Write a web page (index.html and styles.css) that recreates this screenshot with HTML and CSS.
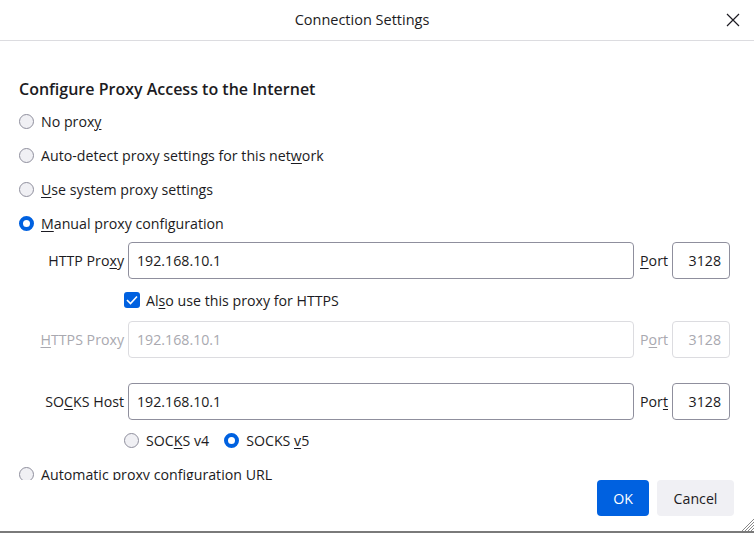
FILE: index.html
```html
<!DOCTYPE html>
<html>
<head>
<meta charset="utf-8">
<link rel="stylesheet" href="styles.css">
</head>
<body>
<div class="window">
  <div class="titlebar">
    <span class="title">Connection Settings</span>
    <span class="close"><svg width="14" height="14" viewBox="0 0 14 14"><path d="M1 1L13 13M13 1L1 13" stroke="#1c1b22" stroke-width="1.2" fill="none"/></svg></span>
  </div>
  <div class="content">
    <h1 class="heading">Configure Proxy Access to the Internet</h1>
    <div class="radio-row"><span class="radio"></span><span>No prox<u>y</u></span></div>
    <div class="radio-row"><span class="radio"></span><span>Auto-detect proxy settings for this net<u>w</u>ork</span></div>
    <div class="radio-row"><span class="radio"></span><span><u>U</u>se system proxy settings</span></div>
    <div class="radio-row"><span class="radio checked"></span><span><u>M</u>anual proxy configuration</span></div>

    <div class="proxy-grid">
      <label class="plabel">HTTP Pro<u>x</u>y</label>
      <div class="field">192.168.10.1</div>
      <label class="portlabel"><u>P</u>ort</label>
      <div class="field port">3128</div>

      <div class="check-row">
        <span class="checkbox"><svg width="12" height="10" viewBox="0 0 12 10"><path d="M1 5L4.5 8.5L11 1.5" stroke="#fff" stroke-width="1.6" fill="none"/></svg></span>
        <span>Al<u>s</u>o use this proxy for HTTPS</span>
      </div>

      <label class="plabel disabled"><u>H</u>TTPS Proxy</label>
      <div class="field disabled">192.168.10.1</div>
      <label class="portlabel disabled">P<u>o</u>rt</label>
      <div class="field port disabled">3128</div>

      <div class="spacer"></div>

      <label class="plabel">SO<u>C</u>KS Host</label>
      <div class="field">192.168.10.1</div>
      <label class="portlabel">Por<u>t</u></label>
      <div class="field port">3128</div>

      <div class="socks-row">
        <span class="radio small"></span><span class="socks-label">SOC<u>K</u>S v4</span>
        <span class="radio small checked"></span><span>SOCKS <u>v</u>5</span>
      </div>
    </div>

    <div class="radio-row last"><span class="radio"></span><span>Automatic proxy configuration URL</span></div>
  </div>
  <div class="footer">
    <button class="btn primary">OK</button>
    <button class="btn">Cancel</button>
  </div>
  <span class="grip"><svg width="14" height="14" viewBox="0 0 14 14"><path d="M14 2L2 14M14 5L5 14M14 8L8 14M14 11L11 14" stroke="#888" stroke-width="1" fill="none"/></svg></span>
</div>
</body>
</html>
```

FILE: styles.css
```css
* { box-sizing: border-box; }
html, body { margin: 0; padding: 0; background: #fff; }
body {
  font-family: "Open Sans", "Noto Sans", sans-serif;
  font-size: 14.2px;
  color: #1c1b22;
}
u { text-decoration-thickness: 1px; text-underline-offset: 2px; }
.window {
  position: relative;
  width: 754px;
  height: 533px;
  border-radius: 8px 8px 0 0;
  border-bottom: 2px solid #7a7a7a;
  overflow: hidden;
  display: flex;
  flex-direction: column;
}
.titlebar {
  height: 41px;
  flex: none;
  border-bottom: 1px solid #dcdce0;
  display: flex;
  align-items: center;
  justify-content: center;
  padding-right: 30px;
  position: relative;
}
.title { font-size: 14.5px; color: #1c1b22; margin-top: -1px; }
.close { position: absolute; right: 14px; top: 13px; width: 14px; height: 14px; display: flex; }
.content {
  height: 439px;
  flex: none;
  overflow: hidden;
  padding: 0 24px 0 19px;
}
.heading {
  margin: 36px 0 0 0;
  height: 24px;
  line-height: 24px;
  font-size: 16px;
  font-weight: 600;
}
.radio-row {
  display: flex;
  align-items: center;
  height: 34px;
  gap: 7px;
}
.radio-row:first-of-type { margin-top: 3px; }
.radio {
  width: 15px;
  height: 15px;
  border-radius: 50%;
  border: 1px solid #8f8f9d;
  background: #f0f0f4;
  flex: none;
}
.radio.checked {
  border: 4px solid #0061e0;
  background: #fff;
}
.proxy-grid {
  display: grid;
  grid-template-columns: 105px 1fr auto 58px;
  column-gap: 4px;
  align-items: center;
  margin-top: 2px;
}
.plabel { text-align: right; }
.portlabel { padding: 0 0 0 2px; }
.field {
  height: 37px;
  border: 1px solid #8f8f9d;
  border-radius: 4px;
  padding: 0 8px;
  display: flex;
  align-items: center;
}
.field.port { justify-content: flex-end; padding-right: 8px; }
.disabled { color: #a9a9b0; }
.field.disabled { border-color: #dcdce0; }
.check-row {
  grid-column: 2 / 5;
  margin-left: -4px;
  height: 42px;
  display: flex;
  align-items: center;
  gap: 6px;
}
.checkbox {
  width: 16px;
  height: 16px;
  background: #0061e0;
  border-radius: 3px;
  display: flex;
  align-items: center;
  justify-content: center;
  flex: none;
}
.spacer { grid-column: 1 / 5; height: 25px; }
.socks-row {
  grid-column: 2 / 5;
  margin-left: -4px;
  height: 40px;
  display: flex;
  align-items: center;
  gap: 7px;
}
.socks-label { margin-right: 8px; }
.radio-row.last { height: 28px; margin-top: 0; }
.footer {
  flex: none;
  display: flex;
  justify-content: flex-end;
  gap: 8px;
  padding: 0 20px 0 0;
  height: 51px;
}
.btn {
  font-family: inherit;
  font-size: 14.2px;
  height: 36px;
  border: none;
  border-radius: 4px;
  background: #f0f0f4;
  color: #1c1b22;
  padding: 0 16px;
}
.btn.primary { background: #0061e0; color: #fff; width: 52px; padding: 0; }
.btn:not(.primary) { width: 77px; padding: 0; }
.grip { position: absolute; right: 0; bottom: 0; width: 14px; height: 14px; display: flex; }
```
